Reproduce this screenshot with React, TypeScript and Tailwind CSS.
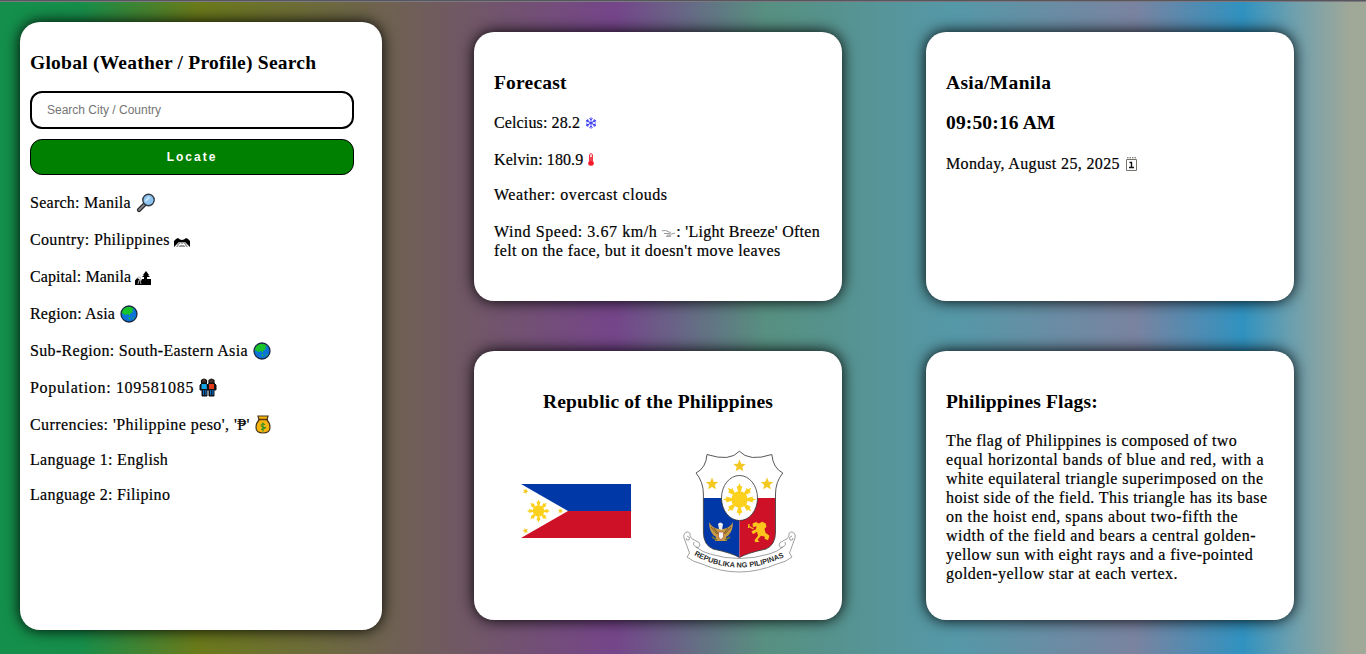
import React from "react";

const body = "font-['Liberation_Serif',serif] text-[16px] leading-[19px] [-webkit-text-stroke:0.2px_#000]";

function Star({ x, y, r, a = 0 }: { x: number; y: number; r: number; a?: number }) {
  const pts = Array.from({ length: 10 }, (_, i) => {
    const q = i % 2 ? r * 0.45 : r;
    const t = ((i * 36 - 90 + a) * Math.PI) / 180;
    return `${x + q * Math.cos(t)},${y + q * Math.sin(t)}`;
  }).join(" ");
  return <polygon points={pts} fill="#f3c822" />;
}

function Sun({ x, y, r }: { x: number; y: number; r: number }) {
  return (
    <g transform={`translate(${x} ${y}) scale(${r / 20})`} fill="#fbd11d">
      <circle r="10" />
      {[0, 45, 90, 135, 180, 225, 270, 315].map((a) => (
        <path key={a} transform={`rotate(${a})`} d="M-1.500-9L-3.500-16-1.600-16 0-20 1.600-16 3.500-16 1.500-9Z" />
      ))}
    </g>
  );
}

function Flag() {
  return (
    <svg width="110" height="54" viewBox="0 0 110 54">
      <path fill="#0038a8" d="M0 0h110v27H0z" />
      <path fill="#ce1126" d="M0 27h110v27H0z" />
      <path fill="#fff" d="M0 0l47 27L0 54z" />
      <Sun x={17.5} y={27} r={11.5} />
      <Star x={4.5} y={7.3} r={3} a={20} />
      <Star x={4.5} y={46.7} r={3} a={-20} />
      <Star x={39.5} y={27} r={2.8} a={90} />
    </svg>
  );
}

function Emblem() {
  const shield = "M69.400 11.200Q60 22 37 14.500Q36 28 26 33Q33.400 42 33.400 54V92Q33.400 105 43 109Q62 113 69.400 117.500Q77 113 96 109Q105.500 105 105.500 92V54Q105.500 42 112.800 33Q103 28 101.800 14.500Q79 22 69.400 11.200Z";
  return (
    <svg width="140" height="140" viewBox="0 0 140 140">
      <defs>
        <clipPath id="shield"><path d={shield} /></clipPath>
        <path id="motto" d="M23 114.500Q69 141 121 113.500" />
      </defs>
      <path d={shield} fill="#fff" />
      <g clipPath="url(#shield)">
        <path fill="#0038a8" d="M20 58h49.500v68H20z" />
        <path fill="#ce1126" d="M69.500 58H120v68H69.500z" />
      </g>
      <path d={shield} fill="none" stroke="#444" strokeWidth=".9" />
      <ellipse cx="69.500" cy="58" rx="18" ry="22.500" fill="#fff" stroke="#333" strokeWidth=".8" />
      <Sun x={69.5} y={59.5} r={16.5} />
      <Star x={69.5} y={26} r={6.5} />
      <Star x={42} y={44} r={6.5} />
      <Star x={97} y={44} r={6.5} />
      <g transform="translate(51 93)">
        <path fill="#c99a42" d="M-2-4Q-9-5-12-11Q-12 0-5 4L-6 8H6L5 4Q12 0 12-11Q9-5 2-4Z" />
        <path stroke="#674625" strokeWidth=".8" fill="none" d="M-10-6L-4 1M-7-5L-2 2M10-6L4 1M7-5L2 2" />
        <path fill="#eee" d="M-3-9Q-1-12 2-9L1-3-2-4Z" />
        <path fill="#f4f4f4" stroke="#b0523c" strokeWidth=".7" d="M-2.500-1H2.500V4L0 7-2.500 4Z" />
        <path fill="none" stroke="#73732e" strokeWidth="1.600" d="M-9 4L-4 7M9 4L4 7" />
      </g>
      <path fill="#fcc51c" d="M82.500 83.500L86 82l3 1.500 3-1.800 3.500 1.500 1 3.500-2 2 1 4 4 3-1.500 4.500-3.500-1.500.5-2-4-1-3.500 4 2 2-4 .5-1-2 3.500-4.500-1-4-4 2.500-1.500-3 4.500-2 .5-3-3.500 1z" />
      <path fill="none" stroke="#fcc51c" strokeWidth="1.300" d="M78.500 86l5 3M79 84l-.5 4" />
      <g fill="#fff" stroke="#888" strokeWidth=".8">
        <path d="M19.500 113Q17 106 14 98Q13 93 17 92Q21 92 20 96Q21 99 26 101Q30 102 30 105Q29 109 26 107Q32 112 40 114Q69 123 99 114Q107 112 113 107Q110 109 109 105Q109 102 113 101Q118 99 119 96Q118 92 122 92Q126 93 125 98L119.500 113L122 117Q116 122 107 124Q69 140 32 124Q23 122 17 117Z" />
        <path fill="none" d="M17 96Q21 97 19 100Q16 101 16 98M122 96Q118 97 120 100Q123 101 123 98M26 107Q22 105 24 102M113 107Q117 105 115 102" />
      </g>
      <text className="font-['Liberation_Sans',sans-serif] [-webkit-text-stroke:0]" fontSize="7.300" fontWeight="700" letterSpacing="0.050" fill="#2a2a2a">
        <textPath href="#motto" startOffset="1">REPUBLIKA NG PILIPINAS</textPath>
      </text>
    </svg>
  );
}

function Globe() {
  return (
    <svg width="18" height="18" viewBox="0 0 18 18">
      <circle cx="9" cy="9" r="8" fill="#0c74d8" />
      <path fill="#19c42a" d="M1.500 8Q2 3 7 1.500L12 2l2 2-2 1 1 2-2 1-1 1 0 2-2-2-3 1-2-1.500zM9 12l1.500 1-.5 1.500-1.500-1zM12.500 13l2-1-1 2z" />
      <circle cx="9" cy="9" r="8" fill="none" stroke="#1b2940" strokeWidth="1.300" />
    </svg>
  );
}

function Icon({ name }: { name: string }) {
  if (name === "globe") return <Globe />;
  if (name === "search")
    return (
      <svg width="20" height="20" viewBox="0 0 20 20">
        <path d="M3 17l6-6" stroke="#222" strokeWidth="4.200" strokeLinecap="round" />
        <path d="M3 17l6-6" stroke="#82868c" strokeWidth="1.800" strokeLinecap="round" />
        <circle cx="12.500" cy="7" r="5.700" fill="#8fc4f0" stroke="#303842" strokeWidth="1.400" />
        <path d="M9.500 8l4-4" stroke="#c5e4fb" strokeWidth="2" />
      </svg>
    );
  if (name === "map")
    return (
      <svg width="16" height="9" viewBox="0 0 16 9">
        <path d="M0 9V3L2 1 4 0l2 1.500 2 .5 2-.5L12 0l2 1 2 2v6l-3-3-2-2H5L3 6z" />
        <path d="M2 9l3-5h6l3 5z" fill="#999" />
        <path d="M5 6.500h6M4 9l3-4M12 9L9 5" stroke="#fff" strokeWidth=".9" />
      </svg>
    );
  if (name === "city")
    return (
      <svg width="16" height="14" viewBox="0 0 16 14">
        <path d="M0 14V9.500L2 7l2 1 2 2 1-2h2V6H7l2-2H8l3-4 3 4h-1l2 2h-3v2h4v6z" />
        <path d="M1 8l2-2 2 0 1 3M3 13l1-4h1l1 4" stroke="#bbb" strokeWidth=".9" fill="none" />
      </svg>
    );
  if (name === "people")
    return (
      <svg width="18" height="19" viewBox="0 0 18 19">
        <path d="M2.500 5V2.500Q5-.5 7.500 2.500V5M10 5V2.500Q12.500-.5 15 2.500V5" fill="#4b3028" stroke="#111" strokeWidth="1.200" />
        <path d="M1 12V7l2-2h4l2 2 1-2h5l2 2v5h-2v6h-5v-6H8v6H3v-6z" fill="#111" stroke="#111" />
        <path d="M2.500 6h5l.5 5H2.500z" fill="#16a4e5" />
        <path d="M10 6h5v5h-5z" fill="#e5391c" />
        <path d="M4 12h1.200v5H4zM6.300 12h1.200v5H6.300zM11 12h1.200v5H11zM13.300 12h1.200v5h-1.200z" fill="#086fc6" />
      </svg>
    );
  if (name === "money")
    return (
      <svg width="16" height="19" viewBox="0 0 16 19">
        <path d="M4 5Q1 8 1 12.500Q1 18 8 18Q15 18 15 12.500Q15 8 12 5L13 1H3Z" fill="#f9b40e" stroke="#45361a" strokeWidth="1.200" />
        <path d="M3 4.500h10" stroke="#593711" strokeWidth="1.500" />
        <path d="M10 9.500Q6 8 6.200 10.300T9.800 12.500T6 14.500M8 7.500v9" fill="none" stroke="#148e30" strokeWidth="1" />
      </svg>
    );
  if (name === "snow")
    return (
      <svg width="12" height="12" viewBox="0 0 12 12" fill="none" stroke="#3c3cf8" strokeWidth=".9">
        {[0, 60, 120, 180, 240, 300].map((a) => (
          <path key={a} transform={`rotate(${a} 6 6)`} d="M6 6V.2M4.400 1.200l1.600 1.800L7.600 1.200" />
        ))}
      </svg>
    );
  if (name === "temp")
    return (
      <svg width="6" height="13" viewBox="0 0 6 13">
        <path d="M1.500 1.500Q3-.5 4.500 1.500V8Q6 10 5 12H1Q0 10 1.500 8Z" fill="#ffd0d3" stroke="#f0202f" strokeWidth=".9" />
        <path d="M3 4v5" stroke="#f0202f" strokeWidth="1.600" />
        <circle cx="3" cy="10.300" r="2.300" fill="#f51828" />
      </svg>
    );
  if (name === "wind")
    return (
      <svg width="13" height="7" viewBox="0 0 13 7" fill="none" stroke="#8a8a8a" strokeWidth=".9">
        <path d="M0 .8Q4-.2 6 1.500T9 2M2 3.500H6Q9 5 13 3M4 6.300h5q-1-2-4-1" />
      </svg>
    );
  return (
    <svg width="13" height="14" viewBox="0 0 13 14">
      <path d="M1.500 2.500h10v11h-10z" fill="#fff" stroke="#77736c" />
      <path d="M2 .8h9" stroke="#555" strokeDasharray="1.500 1" />
      <path d="M4.500 5.500h2v5M4 10.500h5" fill="none" stroke="#111" strokeWidth="1.400" />
    </svg>
  );
}

function Sym({ name, cls }: { name: string; cls: string }) {
  return <span className={"shrink-0 " + cls}><Icon name={name} /></span>;
}

const card = "rounded-[20px] bg-white shadow-[0_0_15px_#000]";
const heading = "font-['Liberation_Serif',serif] text-[19.5px] leading-[22px] font-bold whitespace-nowrap [-webkit-text-stroke:0]";

const facts = [
  { t: "Search: Manila", row: "h-[37px]", sp: "tracking-[0.26px]", icon: "search", ic: "ml-[5px]" },
  { t: "Country: Philippines", row: "h-[37px]", sp: "tracking-[0.34px]", icon: "map", ic: "ml-1 mt-1.5" },
  { t: "Capital: Manila", row: "h-[37px]", sp: "tracking-[0.08px]", icon: "city", ic: "ml-1 mt-0.5" },
  { t: "Region: Asia", row: "h-[37px]", sp: "tracking-[0.16px]", icon: "globe", ic: "ml-[5px]" },
  { t: "Sub-Region: South-Eastern Asia", row: "h-[37px]", sp: "tracking-[0.33px]", icon: "globe", ic: "ml-[5px]" },
  { t: "Population: 109581085", row: "h-[37px]", sp: "tracking-[0.68px]", icon: "people", ic: "ml-[5px]" },
  { t: "Currencies: 'Philippine peso', '₱'", row: "h-[37px]", sp: "tracking-[0.43px]", icon: "money", ic: "ml-[5px]" },
  { t: "Language 1: English", row: "h-[35px] -mt-px", sp: "tracking-[0.3px]", icon: "", ic: "" },
  { t: "Language 2: Filipino", row: "h-[35px]", sp: "tracking-[0.3px]", icon: "", ic: "" },
];

const flagLines = [
  { t: "The flag of Philippines is composed of two", sp: "tracking-[0.36px]" },
  { t: "equal horizontal bands of blue and red, with a", sp: "tracking-[0.55px]" },
  { t: "white equilateral triangle superimposed on the", sp: "tracking-[0.46px]" },
  { t: "hoist side of the field. This triangle has its base", sp: "tracking-[0.4px]" },
  { t: "on the hoist end, spans about two-fifth the", sp: "tracking-[0.53px]" },
  { t: "width of the field and bears a central golden-", sp: "tracking-[0.5px]" },
  { t: "yellow sun with eight rays and a five-pointed", sp: "tracking-[0.4px]" },
  { t: "golden-yellow star at each vertex.", sp: "tracking-[0.46px]" },
];

export default function App() {
  return (
    <main className={"flex h-[654px] w-[1366px] overflow-hidden border-t border-[#56565e] shadow-[inset_0_1px_0_#7c7980] bg-[linear-gradient(90deg,#14904c_0px,#168e4a_80px,#6b7a1a_198px,#6f6055_400px,#75458a_615px,#579080_765px,#5598a8_955px,#7a83a0_1135px,#3092c0_1243px,#6a9faf_1290px,#a0a898_1350px)] pl-5 text-black " + body}>
      <aside className={card + " mt-[21px] h-[608px] w-[362px] shrink-0 px-2.5 pt-[30px]"}>
        <h2 className={heading + " tracking-[0.24px]"}>Global (Weather / Profile) Search</h2>
        <input placeholder="Search City / Country" className="mt-[17px] block h-[38px] w-[324px] rounded-[12px] border-2 border-black px-[15px] font-['Liberation_Sans',sans-serif] text-[12px] [-webkit-text-stroke:0] placeholder:text-[#757575]" />
        <button className="mt-2.5 block h-9 w-[324px] rounded-[12px] border border-black bg-[#008000] font-['Liberation_Sans',sans-serif] text-[12px] font-bold tracking-[2px] text-white [-webkit-text-stroke:0]">Locate</button>
        <div className="mt-[9px]">
          {facts.map((f) => (
            <div key={f.t} className={"flex items-center whitespace-nowrap " + f.row}>
              <span className={f.sp}>{f.t}</span>
              {f.icon && <Sym name={f.icon} cls={f.ic} />}
            </div>
          ))}
        </div>
      </aside>
      <div className="ml-[92px] mt-[31px] grid h-[588px] grid-cols-[368px_368px] grid-rows-[269px_269px] gap-x-[84px] gap-y-[50px]">
        <section className={card + " px-5 pt-10"}>
          <h2 className={heading + " tracking-[0.2px]"}>Forecast</h2>
          <div className="mt-2.5 flex h-[37px] items-center"><span className="tracking-[0.13px]">Celcius: 28.2</span><Sym name="snow" cls="ml-[5px]" /></div>
          <div className="flex h-[37px] items-center"><span className="tracking-[0.1px]">Kelvin: 180.9</span><Sym name="temp" cls="ml-[5px]" /></div>
          <div className="-mt-px flex h-[35px] items-center tracking-[0.55px]">Weather: overcast clouds</div>
          <div className="mt-2.5 flex items-center whitespace-nowrap">
            <span className="tracking-[0.57px]">Wind Speed: 3.67 km/h</span><Sym name="wind" cls="ml-[5px] mr-px mt-1" />
            <span className="tracking-[0.27px]">: 'Light Breeze' Often</span>
          </div>
          <p className="whitespace-nowrap tracking-[0.4px]">felt on the face, but it doesn't move leaves</p>
        </section>
        <section className={card + " px-5 pt-10"}>
          <h2 className={heading + " tracking-[0.32px]"}>Asia/Manila</h2>
          <h2 className={heading + " mt-[18px] tracking-[0.15px]"}>09:50:16 AM</h2>
          <div className="mt-[11px] flex h-[37px] items-center"><span className="tracking-[0.36px]">Monday, August 25, 2025</span><Sym name="calendar" cls="ml-[5px]" /></div>
        </section>
        <section className={card + " pt-10"}>
          <h2 className={heading + " text-center tracking-[0.2px]"}>Republic of the Philippines</h2>
          <div className="flex pl-[47px] pt-[27px]">
            <div className="pt-[44px]"><Flag /></div>
            <div className="ml-[39px]"><Emblem /></div>
          </div>
        </section>
        <section className={card + " px-5 pt-10"}>
          <h2 className={heading + " tracking-[0.16px]"}>Philippines Flags:</h2>
          <div className="mt-[18px] whitespace-nowrap">
            {flagLines.map((l) => <div key={l.t}><span className={l.sp}>{l.t}</span></div>)}
          </div>
        </section>
      </div>
    </main>
  );
}
